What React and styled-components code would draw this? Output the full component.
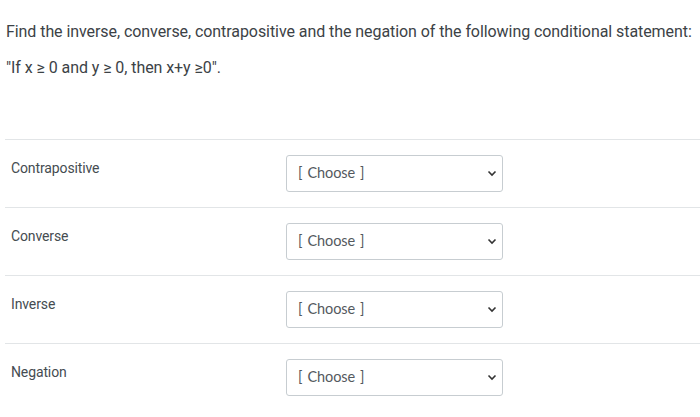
import React from 'react';
import styled, { createGlobalStyle } from 'styled-components';

const GlobalStyle = createGlobalStyle`
    body {
        margin: 0;
        background: #ffffff;
    }
`;

const Page = styled.div`
    width: 700px;
    padding: 20px 0px 0px 6px;
    box-sizing: border-box;
    font-family: Roboto, 'Liberation Sans', sans-serif;
    color: #3c4246;
`;

const Question = styled.p`
    margin: 0px 0px 12px;
    font-size: 16px;
    line-height: 24px;
    letter-spacing: -0.07px;
    white-space: nowrap;
`;

const Answers = styled.div`
    margin-top: 59px;
    margin-left: -1px;
`;

const Row = styled.div`
    display: flex;
    align-items: flex-start;
    height: 68px;
    border-top: 1px solid #e2e5e7;
    box-sizing: border-box;
`;

const Label = styled.div`
    width: 275px;
    padding: 18px 0px 0px 6px;
    font-size: 14px;
    line-height: 20px;
    letter-spacing: -0.12px;
    color: #454c51;
`;

const SelectWrap = styled.div`
    position: relative;
    margin-top: 15px;
    width: 217px;
    height: 37px;
`;

const Select = styled.select`
    appearance: none;
    width: 100%;
    height: 100%;
    padding: 0px 30px 2px 11px;
    border: 1px solid #c7cdd1;
    border-radius: 3px;
    background: #ffffff;
    font-family: Lato, 'Liberation Sans', sans-serif;
    font-size: 14.5px;
    letter-spacing: -0.1px;
    word-spacing: 1.5px;
    color: #54595e;
    box-sizing: border-box;
`;

const Chevron = styled.svg`
    position: absolute;
    right: 6px;
    top: 15px;
    width: 10px;
    height: 7px;
    pointer-events: none;
`;

const rows = ['Contrapositive', 'Converse', 'Inverse', 'Negation'];

const App = () => {
    return (
        <Page>
            <GlobalStyle />
            <Question>
                Find the inverse, converse, contrapositive and the negation of the following conditional statement:
            </Question>
            <Question>"If x ≥ 0 and y ≥ 0, then x+y ≥0".</Question>
            <Answers>
                {rows.map((name) => {
                    return (
                        <Row key={name}>
                            <Label>{name}</Label>
                            <SelectWrap>
                                <Select defaultValue="">
                                    <option value="">[ Choose ]</option>
                                </Select>
                                <Chevron viewBox="0 0 10 7">
                                    <path
                                        d="M1.5 1.5 L5 5 L8.5 1.5"
                                        fill="none"
                                        stroke="#333"
                                        strokeWidth="1.6"
                                    />
                                </Chevron>
                            </SelectWrap>
                        </Row>
                    );
                })}
            </Answers>
        </Page>
    );
};

export default App;
